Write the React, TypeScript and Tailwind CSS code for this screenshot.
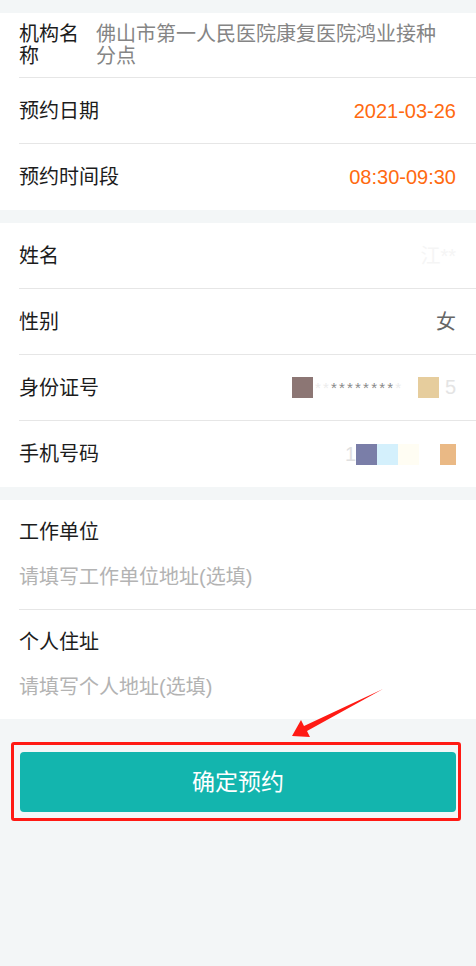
import React from 'react'

const font = { fontFamily: '"Liberation Sans", "Noto Sans CJK SC", sans-serif' }

const Row = ({ label, children, last }: { label: string; children?: React.ReactNode; last?: boolean }) => (
  <div className="pl-[19px]">
    <div className={`flex items-center justify-between pr-5 ${last ? 'h-[66px]' : 'h-[66px] border-b border-[#e6e6e6]'}`}>
      <span className="text-[20px] leading-[22px] text-[#1c1c1c]">{label}</span>
      <div className="flex items-center">{children}</div>
    </div>
  </div>
)

const Block = ({ label, placeholder, last }: { label: string; placeholder: string; last?: boolean }) => (
  <div className="pl-[19px]">
    <div className={`flex flex-col gap-[23px] py-[21px] ${last ? '' : 'border-b border-[#e6e6e6]'}`}>
      <span className="text-[20px] leading-[22px] text-[#1c1c1c]">{label}</span>
      <span className="text-[20px] leading-[22px] text-[#b3b3b3]">{placeholder}</span>
    </div>
  </div>
)

const App = () => {
  return (
    <div className="relative w-[476px] min-h-[966px] bg-[#f3f6f7] pt-[13px]" style={font}>
      <div className="bg-white">
        <div className="pl-[19px]">
          <div className="flex border-b border-[#e6e6e6] py-[10px] pr-5">
            <span className="w-[62px] shrink-0 text-[20px] leading-[22px] text-[#1c1c1c]">机构名称</span>
            <span className="ml-[15px] w-[350px] text-[20px] leading-[22px] text-[#858585]">
              佛山市第一人民医院康复医院鸿业接种分点
            </span>
          </div>
        </div>
        <Row label="预约日期">
          <span className="text-[20px] text-[#ff6a10]">2021-03-26</span>
        </Row>
        <Row label="预约时间段" last>
          <span className="text-[20px] text-[#ff6a10]">08:30-09:30</span>
        </Row>
      </div>

      <div className="mt-[13px] bg-white">
        <Row label="姓名">
          <span className="text-[20px] text-[#f5f5f5]">江**</span>
        </Row>
        <Row label="性别">
          <span className="text-[20px] text-[#666]">女</span>
        </Row>
        <Row label="身份证号">
          <span className="h-[21px] w-[21px] bg-[#8c7674]"></span>
          <span className="ml-[2px] w-[93px] overflow-hidden whitespace-nowrap text-[15px] leading-[21px] tracking-[2.2px] text-[#8a8a8a]">
            <span className="text-[#ececec]">**</span>********<span className="text-[#ececec]">*</span>
          </span>
          <span className="ml-[10px] h-[21px] w-[21px] bg-[#e6cd9d]"></span>
          <span className="ml-[6px] text-[20px] leading-[21px] text-[#e4e4e4]">5</span>
        </Row>
        <Row label="手机号码" last>
          <span className="text-[20px] leading-[21px] text-[#e0e0e0]">1</span>
          <span className="h-[21px] w-[21px] bg-[#7a7ea8]"></span>
          <span className="h-[21px] w-[21px] bg-[#d4f0fc]"></span>
          <span className="h-[21px] w-[21px] bg-[#fffdf3]"></span>
          <span className="h-[21px] w-[21px] bg-white"></span>
          <span className="h-[21px] w-[16px] bg-[#eab985]"></span>
        </Row>
      </div>

      <div className="mt-[13px] bg-white">
        <Block label="工作单位" placeholder="请填写工作单位地址(选填)" />
        <Block label="个人住址" placeholder="请填写个人地址(选填)" last />
      </div>

      <div className="relative mx-5 mt-[33px]">
        <button className="flex h-[60px] w-full items-center justify-center rounded-[4px] bg-[#13b5ae] text-[23px] text-white">
          确定预约
        </button>
        <div className="pointer-events-none absolute -left-[9px] -top-[10px] h-[79px] w-[450px] rounded-[3px] border-[3px] border-[#ff1a14]"></div>
      </div>

      <svg className="pointer-events-none absolute left-0 top-0" width="476" height="966">
        <polygon
          points="292,736 301,720 304,726 383,689 307,731 310,737"
          fill="#ff1a14"
        />
      </svg>
    </div>
  )
}

export default App
